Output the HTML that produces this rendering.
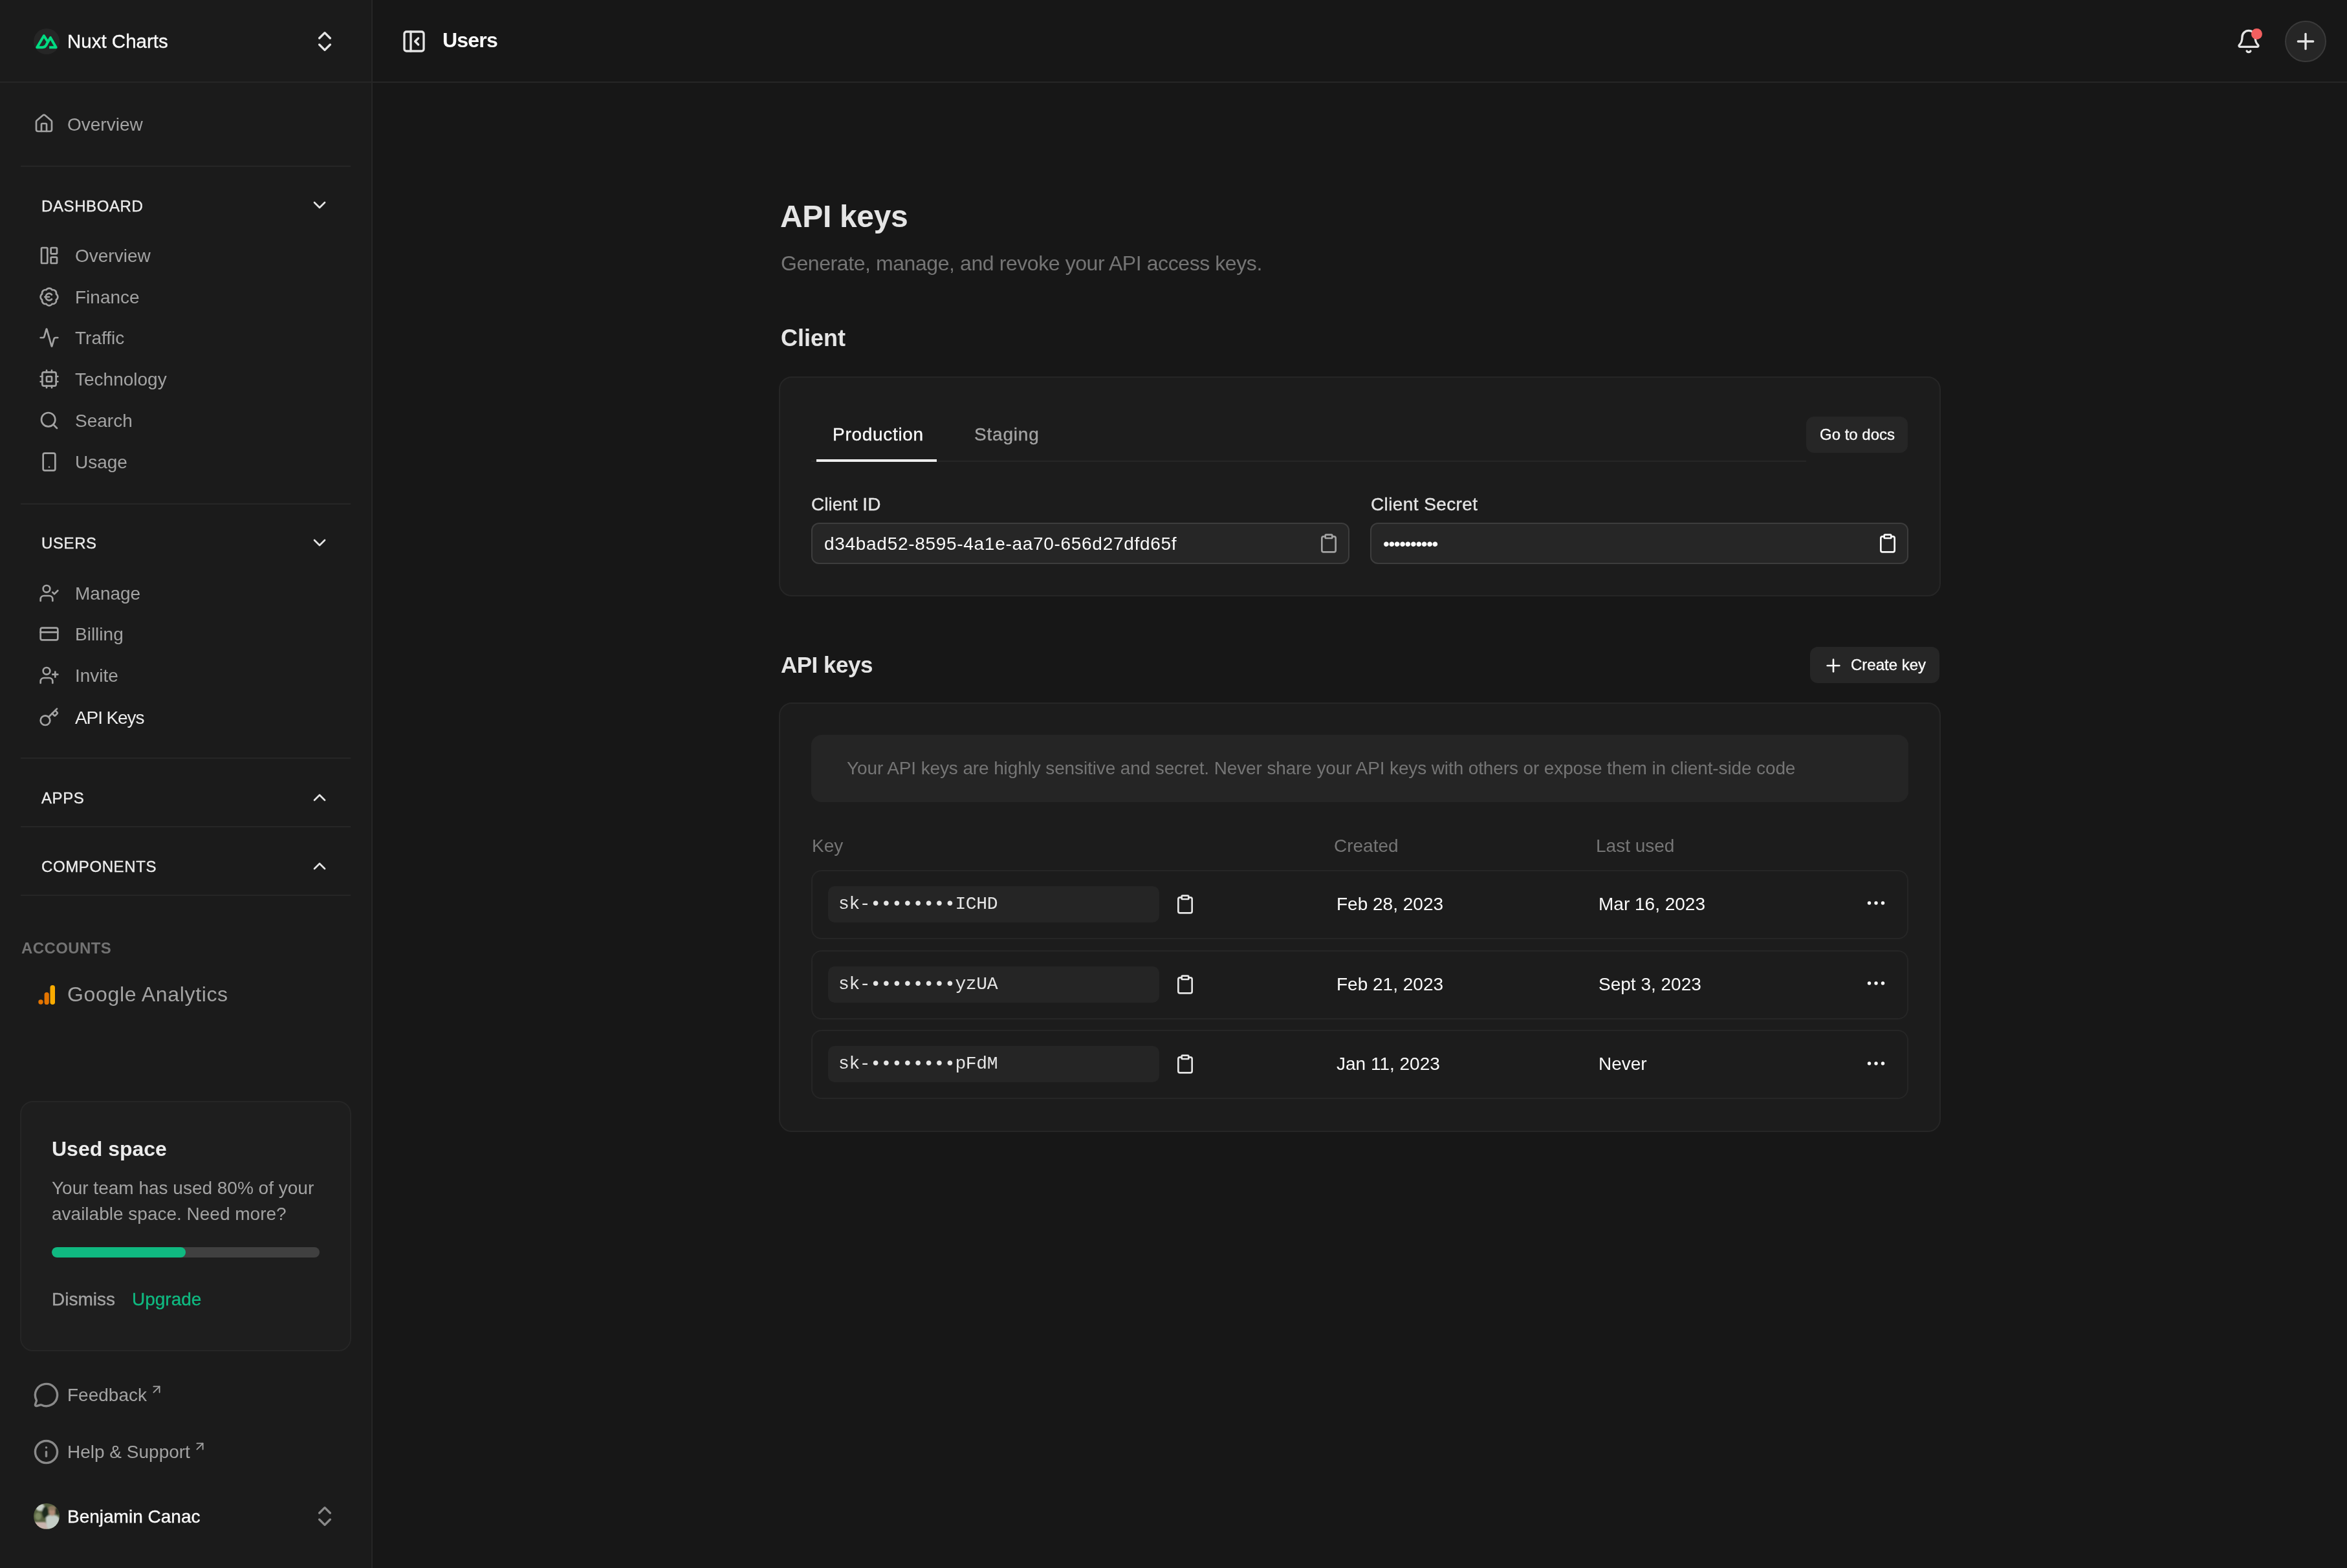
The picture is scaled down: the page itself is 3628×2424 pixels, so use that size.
<!DOCTYPE html>
<html><head><meta charset="utf-8">
<style>
*{box-sizing:border-box;margin:0;padding:0}
html,body{width:3628px;height:2424px;overflow:hidden;background:#171717;font-family:"Liberation Sans",sans-serif;color:#e5e5e5;-webkit-font-smoothing:antialiased}
.a{position:absolute}
.t{position:absolute;white-space:nowrap;line-height:40px;height:40px;will-change:transform}
svg.i{position:absolute;fill:none;stroke:currentColor;stroke-width:2;stroke-linecap:round;stroke-linejoin:round}
#side{position:absolute;left:0;top:0;width:576px;height:2424px;background:#1b1b1b;border-right:2px solid #262626}
.hr{position:absolute;left:32px;width:510px;height:2px;background:#262626}
.nav{color:#a3a3a3;font-size:28px}
.m{-webkit-text-stroke:0.35px currentColor}
.sec{font-size:24px;font-weight:500;letter-spacing:0.6px;color:#ededed;-webkit-text-stroke:0.35px #ededed}
@media (max-width:2400px){html{zoom:0.5}}
</style></head>
<body>
<div id="side">
  <!-- header -->
  <div class="a" style="left:52px;top:44px;width:40px;height:40px;border-radius:50%;background:#262626"></div>
  <svg class="a" style="left:48px;top:40px" width="50" height="50" viewBox="0 0 50 50"><path d="M28.1 33.2 H38.6 L30 18.2 L24.5 27.5 Q22.5 33.2 17.5 33.2 H9.2 L19.9 15.3 L25.8 24.5" fill="none" stroke="#00dc82" stroke-width="4" stroke-linejoin="round" stroke-linecap="butt"/></svg>
  <div class="t m" style="left:104px;top:44px;font-size:29.5px;font-weight:500;color:#fafafa">Nuxt Charts</div>
  <svg class="i" style="left:482px;top:44px;color:#e5e5e5" width="40" height="40" viewBox="0 0 24 24"><path d="m7 15 5 5 5-5"/><path d="m7 9 5-5 5 5"/></svg>
  <div class="a" style="left:0;top:126px;width:576px;height:2px;background:#262626"></div>

  <svg class="i" style="left:52px;top:175px;color:#a3a3a3" width="32" height="32" viewBox="0 0 24 24"><path d="M15 21v-8a1 1 0 0 0-1-1h-4a1 1 0 0 0-1 1v8"/><path d="M3 10a2 2 0 0 1 .709-1.528l7-5.999a2 2 0 0 1 2.582 0l7 5.999A2 2 0 0 1 21 10v9a2 2 0 0 1-2 2H5a2 2 0 0 1-2-2z"/></svg>
  <div class="t nav" style="left:104px;top:173px">Overview</div>
  <div class="hr" style="top:256px"></div>

  <div class="t sec" style="left:64px;top:299px">DASHBOARD</div>
  <svg class="i" style="left:478px;top:301px;color:#e5e5e5" width="32" height="32" viewBox="0 0 24 24"><path d="m6 9 6 6 6-6"/></svg>
  <svg class="i" style="left:60px;top:379px;color:#a3a3a3" width="32" height="32" viewBox="0 0 24 24"><rect width="7" height="18" x="3" y="3" rx="1"/><rect width="7" height="7" x="14" y="3" rx="1"/><rect width="7" height="7" x="14" y="14" rx="1"/></svg>
  <div class="t nav" style="left:116px;top:376px;color:#a3a3a3">Overview</div>
  <svg class="i" style="left:60px;top:443px;color:#a3a3a3" width="32" height="32" viewBox="0 0 24 24"><path d="M3.85 8.62a4 4 0 0 1 4.78-4.77 4 4 0 0 1 6.74 0 4 4 0 0 1 4.78 4.78 4 4 0 0 1 0 6.74 4 4 0 0 1-4.77 4.78 4 4 0 0 1-6.75 0 4 4 0 0 1-4.78-4.77 4 4 0 0 1 0-6.76Z"/><path d="M7 12h5"/><path d="M15 9.4a4 4 0 1 0 0 5.2"/></svg>
  <div class="t nav" style="left:116px;top:440px;color:#a3a3a3">Finance</div>
  <svg class="i" style="left:60px;top:506px;color:#a3a3a3" width="32" height="32" viewBox="0 0 24 24"><path d="M22 12h-2.48a2 2 0 0 0-1.93 1.46l-2.35 8.36a.25.25 0 0 1-.48 0L9.24 2.18a.25.25 0 0 0-.48 0l-2.35 8.36A2 2 0 0 1 4.49 12H2"/></svg>
  <div class="t nav" style="left:116px;top:503px;color:#a3a3a3">Traffic</div>
  <svg class="i" style="left:60px;top:570px;color:#a3a3a3" width="32" height="32" viewBox="0 0 24 24"><rect width="16" height="16" x="4" y="4" rx="2"/><rect width="6" height="6" x="9" y="9" rx="1"/><path d="M15 2v2"/><path d="M15 20v2"/><path d="M2 15h2"/><path d="M2 9h2"/><path d="M20 15h2"/><path d="M20 9h2"/><path d="M9 2v2"/><path d="M9 20v2"/></svg>
  <div class="t nav" style="left:116px;top:567px;color:#a3a3a3">Technology</div>
  <svg class="i" style="left:60px;top:634px;color:#a3a3a3" width="32" height="32" viewBox="0 0 24 24"><circle cx="11" cy="11" r="8"/><path d="m21 21-4.3-4.3"/></svg>
  <div class="t nav" style="left:116px;top:631px;color:#a3a3a3">Search</div>
  <svg class="i" style="left:60px;top:698px;color:#a3a3a3" width="32" height="32" viewBox="0 0 24 24"><rect width="14" height="20" x="5" y="2" rx="2" ry="2"/><path d="M12 18h.01"/></svg>
  <div class="t nav" style="left:116px;top:695px;color:#a3a3a3">Usage</div>
  <svg class="i" style="left:60px;top:901px;color:#a3a3a3" width="32" height="32" viewBox="0 0 24 24"><path d="m16 11 2 2 4-4"/><path d="M16 21v-2a4 4 0 0 0-4-4H6a4 4 0 0 0-4 4v2"/><circle cx="9" cy="7" r="4"/></svg>
  <div class="t nav" style="left:116px;top:898px;color:#a3a3a3">Manage</div>
  <svg class="i" style="left:60px;top:964px;color:#a3a3a3" width="32" height="32" viewBox="0 0 24 24"><rect width="20" height="14" x="2" y="5" rx="2"/><line x1="2" x2="22" y1="10" y2="10"/></svg>
  <div class="t nav" style="left:116px;top:961px;color:#a3a3a3">Billing</div>
  <svg class="i" style="left:60px;top:1028px;color:#a3a3a3" width="32" height="32" viewBox="0 0 24 24"><path d="M16 21v-2a4 4 0 0 0-4-4H6a4 4 0 0 0-4 4v2"/><circle cx="9" cy="7" r="4"/><line x1="19" x2="19" y1="8" y2="14"/><line x1="22" x2="16" y1="11" y2="11"/></svg>
  <div class="t nav" style="left:116px;top:1025px;color:#a3a3a3">Invite</div>
  <svg class="i" style="left:60px;top:1093px;color:#a3a3a3" width="32" height="32" viewBox="0 0 24 24"><path d="m15.5 7.5 2.3 2.3a1 1 0 0 0 1.4 0l2.1-2.1a1 1 0 0 0 0-1.4L19 4"/><path d="m21 2-9.6 9.6"/><circle cx="7.5" cy="15.5" r="5.5"/></svg>
  <div class="t nav" style="left:116px;top:1090px;letter-spacing:-1.1px;color:#ededed">API Keys</div>
  <div class="hr" style="top:778px"></div>
  <div class="t sec" style="left:64px;top:820px">USERS</div>
  <svg class="i" style="left:478px;top:823px;color:#e5e5e5" width="32" height="32" viewBox="0 0 24 24"><path d="m6 9 6 6 6-6"/></svg>
  <div class="hr" style="top:1171px"></div>
  <div class="t sec" style="left:64px;top:1214px">APPS</div>
  <svg class="i" style="left:478px;top:1217px;color:#e5e5e5" width="32" height="32" viewBox="0 0 24 24"><path d="m18 15-6-6-6 6"/></svg>
  <div class="hr" style="top:1277px"></div>
  <div class="t sec" style="left:64px;top:1320px">COMPONENTS</div>
  <svg class="i" style="left:478px;top:1323px;color:#e5e5e5" width="32" height="32" viewBox="0 0 24 24"><path d="m18 15-6-6-6 6"/></svg>
  <div class="hr" style="top:1383px"></div>

  <div class="t" style="left:33px;top:1446px;font-size:24px;font-weight:700;letter-spacing:0.4px;color:#737373">ACCOUNTS</div>
  <svg class="a" style="left:56px;top:1520px" width="34" height="36" viewBox="0 0 34 36">
    <circle cx="7" cy="29" r="3.7" fill="#e37400"/>
    <rect x="12.6" y="14" width="7.2" height="19" rx="3.6" fill="#e37400"/>
    <rect x="21.5" y="3" width="7.5" height="30" rx="3.75" fill="#f9ab00"/>
  </svg>
  <div class="t" style="left:104px;top:1517px;font-size:32px;letter-spacing:0.65px;color:#a3a3a3">Google Analytics</div>

  <div class="a" style="left:31px;top:1702px;width:512px;height:387px;border-radius:20px;background:#1e1e1e;border:2px solid #262626"></div>
  <div class="t" style="left:80px;top:1756px;font-size:32px;font-weight:700;color:#ececec">Used space</div>
  <div class="t" style="left:80px;top:1817px;font-size:28px;color:#a3a3a3">Your team has used 80% of your</div>
  <div class="t" style="left:80px;top:1857px;font-size:28px;color:#a3a3a3">available space. Need more?</div>
  <div class="a" style="left:80px;top:1928px;width:414px;height:16px;border-radius:8px;background:#404040;overflow:hidden"><div style="width:207px;height:16px;border-radius:8px;background:#10b981"></div></div>
  <div class="t m" style="left:80px;top:1989px;font-size:28px;font-weight:500;color:#a3a3a3">Dismiss</div>
  <div class="t m" style="left:204px;top:1989px;font-size:28px;font-weight:500;color:#10b981">Upgrade</div>

  <svg class="i" style="left:51px;top:2136px;color:#8a8a8a" width="41" height="41" viewBox="0 0 24 24"><path d="M2.992 16.342a2 2 0 0 1 .094 1.167l-1.065 3.29a1 1 0 0 0 1.236 1.168l3.413-.998a2 2 0 0 1 1.099.092 10 10 0 1 0-4.777-4.719"/></svg>
  <div class="t nav" style="left:104px;top:2137px">Feedback</div>
  <svg class="i" style="left:231px;top:2137px;color:#a3a3a3" width="22" height="22" viewBox="0 0 24 24"><path d="M7 7h10v10"/><path d="M7 17 17 7"/></svg>
  <svg class="i" style="left:51px;top:2224px;color:#8a8a8a" width="41" height="41" viewBox="0 0 24 24"><circle cx="12" cy="12" r="10"/><path d="M12 16v-4"/><path d="M12 8h.01"/></svg>
  <div class="t nav" style="left:104px;top:2225px">Help &amp; Support</div>
  <svg class="i" style="left:298px;top:2225px;color:#a3a3a3" width="22" height="22" viewBox="0 0 24 24"><path d="M7 7h10v10"/><path d="M7 17 17 7"/></svg>

  <svg class="a" style="left:52px;top:2324px" width="40" height="40" viewBox="0 0 40 40"><defs><clipPath id="avc"><circle cx="20" cy="20" r="20"/></clipPath><filter id="avb"><feGaussianBlur stdDeviation="1"/></filter></defs><g clip-path="url(#avc)"><rect width="40" height="40" fill="#55603f"/><g filter="url(#avb)"><ellipse cx="10" cy="6" rx="7" ry="6" fill="#c8d0c8"/><ellipse cx="18" cy="14" rx="5" ry="9" fill="#1f2a1c"/><ellipse cx="7" cy="20" rx="5" ry="6" fill="#7d8a62"/><path d="M0 29 L18 29 L24 40 L0 40Z" fill="#c9b4ad"/><path d="M19 22 Q24 17 30 18 Q38 18 40 24 L40 40 L22 40 Q18 30 19 22Z" fill="#c4cdc6"/><ellipse cx="28.5" cy="13" rx="5" ry="6.5" fill="#b18d78"/><ellipse cx="28.5" cy="7.5" rx="6" ry="3.5" fill="#8f7a62"/><ellipse cx="37" cy="12" rx="4" ry="6" fill="#2a3324"/></g></g></svg>
  <div class="t m" style="left:104px;top:2325px;font-size:28px;font-weight:500;color:#fafafa">Benjamin Canac</div>
  <svg class="i" style="left:482px;top:2324px;color:#8a8a8a" width="40" height="40" viewBox="0 0 24 24"><path d="m7 15 5 5 5-5"/><path d="m7 9 5-5 5 5"/></svg>
</div>


<!-- main -->
<div class="a" style="left:576px;top:126px;width:3052px;height:2px;background:#262626"></div>

<!-- main header -->
<svg class="i" style="left:620px;top:44px;color:#e5e5e5" width="40" height="40" viewBox="0 0 24 24"><rect width="18" height="18" x="3" y="3" rx="2"/><path d="M9 3v18"/><path d="m16 15-3-3 3-3"/></svg>
<div class="t" style="left:684px;top:42px;font-size:32px;font-weight:700;letter-spacing:-0.8px;color:#fafafa">Users</div>
<svg class="i" style="left:3456px;top:44px;color:#e5e5e5" width="40" height="40" viewBox="0 0 24 24"><path d="M10.268 21a2 2 0 0 0 3.464 0"/><path d="M3.262 15.326A1 1 0 0 0 4 17h16a1 1 0 0 0 .74-1.673C19.41 13.956 18 12.499 18 8A6 6 0 0 0 6 8c0 4.499-1.411 5.956-2.738 7.326"/></svg>
<div class="a" style="left:3480px;top:44px;width:17px;height:17px;border-radius:50%;background:#f25f5f"></div>
<div class="a" style="left:3532px;top:32px;width:64px;height:64px;border-radius:50%;background:#262626;border:2px solid #3a3a3a"></div>
<svg class="i" style="left:3544px;top:44px;color:#e5e5e5" width="40" height="40" viewBox="0 0 24 24"><path d="M5 12h14"/><path d="M12 5v14"/></svg>

<!-- page header -->
<div class="t" style="left:1206px;top:305px;font-size:48px;line-height:60px;height:60px;font-weight:700;letter-spacing:-0.35px;color:#e5e5e5">API keys</div>
<div class="t" style="left:1207px;top:387px;font-size:32px;letter-spacing:-0.42px;color:#757575">Generate, manage, and revoke your API access keys.</div>
<div class="t" style="left:1207px;top:503px;font-size:36px;font-weight:700;color:#e5e5e5">Client</div>

<!-- client card -->
<div class="a" style="left:1204px;top:582px;width:1796px;height:340px;border-radius:20px;background:#1c1c1c;border:2px solid #262626"></div>
<div class="a" style="left:1254px;top:712px;width:1538px;height:2px;background:#262626"></div>
<div class="a" style="left:1262px;top:710px;width:186px;height:4px;background:#ededed"></div>
<div class="t m" style="left:1287px;top:652px;font-size:28px;font-weight:500;letter-spacing:0.7px;color:#fafafa">Production</div>
<div class="t m" style="left:1506px;top:652px;font-size:28px;font-weight:500;letter-spacing:0.8px;color:#a3a3a3">Staging</div>
<div class="a" style="left:2792px;top:644px;width:157px;height:56px;border-radius:12px;background:#262626"></div>
<div class="t m" style="left:2813px;top:652px;font-size:24px;font-weight:500;color:#fafafa">Go to docs</div>

<div class="t m" style="left:1254px;top:760px;font-size:28px;font-weight:500;color:#e5e5e5">Client ID</div>
<div class="t m" style="left:2119px;top:760px;font-size:28px;font-weight:500;letter-spacing:0.4px;color:#e5e5e5">Client Secret</div>
<div class="a" style="left:1254px;top:808px;width:832px;height:64px;border-radius:12px;background:#262626;border:2px solid #3d3d3d"></div>
<div class="a" style="left:2118px;top:808px;width:832px;height:64px;border-radius:12px;background:#262626;border:2px solid #3d3d3d"></div>
<div class="t" style="left:1274px;top:821px;font-size:28px;letter-spacing:0.7px;color:#fafafa">d34bad52-8595-4a1e-aa70-656d27dfd65f</div>
<div class="t" style="left:2138px;top:821px;font-size:28px;color:#fafafa;letter-spacing:-1.4px">&bull;&bull;&bull;&bull;&bull;&bull;&bull;&bull;&bull;&bull;</div>
<svg class="i" style="left:2038px;top:824px;color:#a3a3a3" width="32" height="32" viewBox="0 0 24 24"><rect width="8" height="4" x="8" y="2" rx="1" ry="1"/><path d="M16 4h2a2 2 0 0 1 2 2v14a2 2 0 0 1-2 2H6a2 2 0 0 1-2-2V6a2 2 0 0 1 2-2h2"/></svg>
<svg class="i" style="left:2902px;top:824px;color:#fafafa" width="32" height="32" viewBox="0 0 24 24"><rect width="8" height="4" x="8" y="2" rx="1" ry="1"/><path d="M16 4h2a2 2 0 0 1 2 2v14a2 2 0 0 1-2 2H6a2 2 0 0 1-2-2V6a2 2 0 0 1 2-2h2"/></svg>

<!-- api keys -->
<div class="t" style="left:1207px;top:1008px;font-size:35px;font-weight:700;letter-spacing:-0.5px;color:#e5e5e5">API keys</div>
<div class="a" style="left:2798px;top:1000px;width:200px;height:56px;border-radius:12px;background:#262626"></div>
<svg class="i" style="left:2818px;top:1013px;color:#fafafa" width="32" height="32" viewBox="0 0 24 24"><path d="M5 12h14"/><path d="M12 5v14"/></svg>
<div class="t m" style="left:2861px;top:1008px;font-size:24px;font-weight:500;color:#fafafa">Create key</div>

<div class="a" style="left:1204px;top:1086px;width:1796px;height:664px;border-radius:20px;background:#1c1c1c;border:2px solid #262626"></div>
<div class="a" style="left:1254px;top:1136px;width:1696px;height:104px;border-radius:16px;background:#252525"></div>
<div class="t" style="left:1309px;top:1168px;font-size:28px;letter-spacing:-0.12px;color:#757575">Your API keys are highly sensitive and secret. Never share your API keys with others or expose them in client-side code</div>

<div class="t" style="left:1255px;top:1288px;font-size:28px;color:#757575">Key</div>
<div class="t" style="left:2062px;top:1288px;font-size:28px;color:#757575">Created</div>
<div class="t" style="left:2467px;top:1288px;font-size:28px;color:#757575">Last used</div>

<div class="a" style="left:1254px;top:1345px;width:1696px;height:107px;border-radius:16px;border:2px solid #262626"></div>
<div class="a" style="left:1280px;top:1370px;width:512px;height:56px;border-radius:10px;background:#252525"></div>
<div class="t" style="left:1296px;top:1378px;font-family:'Liberation Mono',monospace;font-size:28px;letter-spacing:-0.4px;color:#e5e5e5">sk-••••••••ICHD</div>
<svg class="i" style="left:1816px;top:1382px;color:#e5e5e5" width="32" height="32" viewBox="0 0 24 24"><rect width="8" height="4" x="8" y="2" rx="1" ry="1"/><path d="M16 4h2a2 2 0 0 1 2 2v14a2 2 0 0 1-2 2H6a2 2 0 0 1-2-2V6a2 2 0 0 1 2-2h2"/></svg>
<div class="t" style="left:2066px;top:1378px;font-size:28px;color:#fafafa">Feb 28, 2023</div>
<div class="t" style="left:2471px;top:1378px;font-size:28px;color:#fafafa">Mar 16, 2023</div>
<svg class="i" style="left:2882px;top:1378px;color:#fafafa;stroke:none;fill:currentColor" width="36" height="36" viewBox="0 0 24 24"><circle cx="12" cy="12" r="1.8"/><circle cx="19" cy="12" r="1.8"/><circle cx="5" cy="12" r="1.8"/></svg>

<div class="a" style="left:1254px;top:1469px;width:1696px;height:107px;border-radius:16px;border:2px solid #262626"></div>
<div class="a" style="left:1280px;top:1494px;width:512px;height:56px;border-radius:10px;background:#252525"></div>
<div class="t" style="left:1296px;top:1502px;font-family:'Liberation Mono',monospace;font-size:28px;letter-spacing:-0.4px;color:#e5e5e5">sk-••••••••yzUA</div>
<svg class="i" style="left:1816px;top:1506px;color:#e5e5e5" width="32" height="32" viewBox="0 0 24 24"><rect width="8" height="4" x="8" y="2" rx="1" ry="1"/><path d="M16 4h2a2 2 0 0 1 2 2v14a2 2 0 0 1-2 2H6a2 2 0 0 1-2-2V6a2 2 0 0 1 2-2h2"/></svg>
<div class="t" style="left:2066px;top:1502px;font-size:28px;color:#fafafa">Feb 21, 2023</div>
<div class="t" style="left:2471px;top:1502px;font-size:28px;color:#fafafa">Sept 3, 2023</div>
<svg class="i" style="left:2882px;top:1502px;color:#fafafa;stroke:none;fill:currentColor" width="36" height="36" viewBox="0 0 24 24"><circle cx="12" cy="12" r="1.8"/><circle cx="19" cy="12" r="1.8"/><circle cx="5" cy="12" r="1.8"/></svg>

<div class="a" style="left:1254px;top:1592px;width:1696px;height:107px;border-radius:16px;border:2px solid #262626"></div>
<div class="a" style="left:1280px;top:1617px;width:512px;height:56px;border-radius:10px;background:#252525"></div>
<div class="t" style="left:1296px;top:1625px;font-family:'Liberation Mono',monospace;font-size:28px;letter-spacing:-0.4px;color:#e5e5e5">sk-••••••••pFdM</div>
<svg class="i" style="left:1816px;top:1629px;color:#e5e5e5" width="32" height="32" viewBox="0 0 24 24"><rect width="8" height="4" x="8" y="2" rx="1" ry="1"/><path d="M16 4h2a2 2 0 0 1 2 2v14a2 2 0 0 1-2 2H6a2 2 0 0 1-2-2V6a2 2 0 0 1 2-2h2"/></svg>
<div class="t" style="left:2066px;top:1625px;font-size:28px;color:#fafafa">Jan 11, 2023</div>
<div class="t" style="left:2471px;top:1625px;font-size:28px;color:#fafafa">Never</div>
<svg class="i" style="left:2882px;top:1626px;color:#fafafa;stroke:none;fill:currentColor" width="36" height="36" viewBox="0 0 24 24"><circle cx="12" cy="12" r="1.8"/><circle cx="19" cy="12" r="1.8"/><circle cx="5" cy="12" r="1.8"/></svg>
</body></html>
